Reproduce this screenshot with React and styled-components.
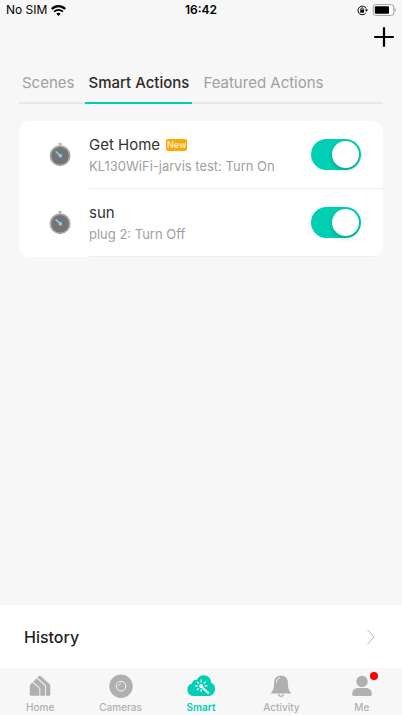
import React, { useState } from 'react';
import styled, { createGlobalStyle } from 'styled-components';

const GlobalStyle = createGlobalStyle`
  * {
    box-sizing: border-box;
  }

  body {
    margin: 0;
    background: #f7f7f7;
    color: #2b2b2b;
    font-family: Inter, 'Liberation Sans', sans-serif;
  }

  button {
    font-family: inherit;
    color: inherit;
    background: none;
    border: 0;
    padding: 0;
    cursor: pointer;
  }
`;

const Page = styled.div`
  display: flex;
  flex-direction: column;
  min-height: 100vh;
`;

const StatusBar = styled.div`
  display: grid;
  grid-template-columns: 1fr auto 1fr;
  align-items: center;
  height: 20px;
  padding: 0 6px;
  font-size: 12px;
  line-height: 20px;
  color: #000;
`;

const StatusGroup = styled.div`
  display: flex;
  align-items: center;
  justify-content: ${(props) => (props.$end ? 'flex-end' : 'flex-start')};
  gap: 4px;
`;

const Clock = styled.span`
  font-weight: 600;
`;

const Header = styled.header`
  display: flex;
  justify-content: flex-end;
  padding: 6px 7px;
`;

const AddButton = styled.button`
  display: flex;
  width: 22px;
  height: 22px;
`;

const Tabs = styled.div`
  display: flex;
  gap: 8px;
  margin: 8px 19px 0;
  border-bottom: 2px solid #e8e8e8;
`;

const Tab = styled.button`
  height: 42px;
  margin-bottom: -2px;
  padding: 2px 3px 0;
  border-bottom: 2px solid ${(props) => (props.$active ? '#00cfb4' : 'transparent')};
  font-size: 15px;
  font-weight: ${(props) => (props.$active ? 500 : 400)};
  line-height: 20px;
  white-space: nowrap;
  color: ${(props) => (props.$active ? '#2b2b2b' : '#a0a0a0')};
`;

const Card = styled.ul`
  list-style: none;
  margin: 17px 19px 0;
  padding: 0 0 0 30px;
  background: #fff;
  border-radius: 10px;
  overflow: hidden;
`;

const Row = styled.li`
  display: flex;
  align-items: center;
  gap: 18px;
  height: 68px;
`;

const RowBody = styled.div`
  flex: 1;
  display: flex;
  align-items: center;
  justify-content: space-between;
  height: 100%;
  padding-right: 22px;
  border-bottom: 1px solid #ededed;
`;

const RowTitle = styled.label`
  display: flex;
  align-items: center;
  gap: 6px;
  font-size: 15px;
  line-height: 22px;
  color: #333;
`;

const RowDetail = styled.div`
  font-size: 13px;
  line-height: 20px;
  color: #a0a0a0;
`;

const Badge = styled.span`
  height: 12px;
  padding: 0 1px;
  border-radius: 2px;
  background: #ffa800;
  color: #fff;
  font-size: 9px;
  line-height: 12px;
`;

const Switch = styled.input`
  appearance: none;
  flex: none;
  display: flex;
  width: 50px;
  height: 31px;
  margin: 0;
  padding: 2px;
  border-radius: 16px;
  background: #d9d9d9;
  cursor: pointer;

  &::before {
    content: '';
    width: 27px;
    height: 27px;
    border-radius: 50%;
    background: #fff;
    box-shadow: 0 2px 5px rgba(0, 0, 0, 0.2);
  }

  &:checked {
    justify-content: flex-end;
    background: #00cfb4;
  }
`;

const HistoryButton = styled.button`
  display: flex;
  align-items: center;
  justify-content: space-between;
  height: 63px;
  margin-top: auto;
  padding: 0 27px 0 24px;
  background: #fff;
  font-size: 16px;
  font-weight: 500;
  color: #1f1f1f;
`;

const BottomNav = styled.nav`
  display: grid;
  grid-template-columns: repeat(5, 1fr);
  height: 47px;
`;

const NavLink = styled.a`
  display: flex;
  flex-direction: column;
  align-items: center;
  gap: 3px;
  padding-top: 6px;
  color: ${(props) => (props.$active ? '#00cfb4' : '#b0b0b0')};
  font-size: 10px;
  font-weight: ${(props) => (props.$active ? 600 : 500)};
  line-height: 12px;
  text-decoration: none;
`;

const NavIcon = styled.span`
  position: relative;
  display: flex;
`;

const Dot = styled.span`
  position: absolute;
  top: -2px;
  right: -4px;
  width: 8px;
  height: 8px;
  border-radius: 50%;
  background: #f00;
`;

const WifiIcon = () => (
  <svg width="15" height="11" viewBox="0 0 15 11" fill="none" stroke="#000" strokeWidth="2.2">
    <path d="M0.8 4.1C4.7 0.1 10.3 0.1 14.2 4.1" />
    <path d="M3.1 6.6c2.5-2.4 6.3-2.4 8.8 0" strokeWidth="1.8" />
    <path d="M5.3 8.8a3.3 3.3 0 0 1 4.4 0L7.5 11z" fill="#000" stroke="none" />
  </svg>
);

const RotationLockIcon = () => (
  <svg width="11" height="11" viewBox="0 0 11 11" fill="none" stroke="#000">
    <path d="M8.9 7.8A4.3 4.3 0 1 1 9.2 3.6" />
    <path d="M7.6 4.6h3.4L9.6 6.8z" fill="#000" stroke="none" />
    <path d="M3.9 5V4a1.2 1.2 0 0 1 2.4 0v1" strokeWidth="0.8" />
    <rect x="3.2" y="4.7" width="3.8" height="3" fill="#000" stroke="none" />
  </svg>
);

const BatteryIcon = () => (
  <svg width="24" height="12" viewBox="0 0 24 12">
    <rect x="1.2" y="0.6" width="20.6" height="10.8" rx="2.6" fill="#fff" stroke="#a0a0a0" />
    <rect x="2.8" y="2.2" width="14.2" height="7.6" rx="1" fill="#000" />
    <path d="M22.6 4.2c1.6 0.5 1.6 3.1 0 3.6z" fill="#a0a0a0" />
  </svg>
);

const PlusIcon = () => (
  <svg width="22" height="22" viewBox="0 0 22 22" stroke="#000" strokeWidth="2.2">
    <path d="M11 1.2v19.6M1.2 11h19.6" />
  </svg>
);

const StopwatchIcon = () => (
  <svg width="22" height="24" viewBox="0 0 22 24">
    <path d="M9.3 0.8h3.6M11.1 0.8v3" stroke="#a9a9a9" strokeWidth="1.2" />
    <circle cx="11.1" cy="12.7" r="9.6" fill="#747474" stroke="#a7a7a7" strokeWidth="1.7" />
    <path d="M6.6 8.3l4.6 4.2" stroke="#83cbe9" strokeWidth="1.6" />
    <circle cx="11.3" cy="12.7" r="1.9" fill="#83cbe9" />
  </svg>
);

const ChevronIcon = () => (
  <svg width="8" height="16" viewBox="0 0 8 16" fill="none" stroke="#b5b5b5">
    <path d="M0.5 0.7L7 8L0.5 15.3" />
  </svg>
);

const HomeIcon = () => (
  <svg width="24" height="24" viewBox="0 0 24 24">
    <path
      d="M10.9 2Q11.8 1.3 12.7 2L21.3 9.7Q22.3 10.6 22.3 11.8V20.5Q22.3 21.8 21 21.8H17.9V12.2Q17.9 11.2 17.1 10.5L9.3 3.6z"
      fill="currentColor"
    />
    <path
      d="M8.6 4.3L16.4 11.2Q17 11.8 17 12.7V21.8H12.3V15.1Q12.3 14.1 11.5 13.4L5.1 7.7z"
      fill="currentColor"
    />
    <path
      d="M4.4 8.4L10.8 14.1Q11.4 14.7 11.4 15.6V21.8H3.1Q1.8 21.8 1.8 20.5V12.2Q1.8 10.9 2.7 10z"
      fill="currentColor"
    />
  </svg>
);

const CamerasIcon = () => (
  <svg width="24" height="24" viewBox="0 0 24 24" fill="none">
    <circle cx="12" cy="12.2" r="11.7" fill="currentColor" />
    <circle cx="12" cy="12.2" r="4.8" stroke="#f7f7f7" />
    <path d="M9.6 12a2.5 2.5 0 0 1 2.2-2.3" stroke="#f7f7f7" strokeWidth="0.8" />
  </svg>
);

const SmartIcon = () => (
  <svg width="30" height="24" viewBox="0 0 30 24" fill="none">
    <path
      d="M7.2 22.1A6.4 6.4 0 0 1 6 9.6C6.2 7 8.6 5.3 11 5.7 12.2 2.8 14.7 1.2 17.6 1.2c4.4 0 7.6 3.2 7.6 7.6 2.5 1 3.9 3.2 3.9 6 0 4.2-3 7.3-6.8 7.3z"
      fill="currentColor"
    />
    <path d="M15.4 12.4l7.4 7" stroke="#fff" strokeWidth="2" />
    <path
      d="M15.2 5.6v3M15.2 15v2.8M9 11.9h2.8M18.8 11.9h2.6M10.9 7.6l1.9 1.9M19.6 7.6l-1.9 1.9M10.9 16.2l1.9-1.9"
      stroke="#fff"
      strokeWidth="1.2"
    />
    <circle cx="15.2" cy="12" r="2" fill="#fff" />
  </svg>
);

const ActivityIcon = () => (
  <svg width="24" height="24" viewBox="0 0 24 24" fill="none">
    <path
      d="M12 1.6c4.4 0 6.9 2.9 6.9 7.1 0 5 0.7 7.4 3.6 10.9H1.5C4.4 16.1 5.1 13.7 5.1 8.7 5.1 4.5 7.6 1.6 12 1.6z"
      fill="currentColor"
    />
    <path d="M7.3 8.5c0.2-2.7 1.5-4.3 3.7-4.8" stroke="#f7f7f7" />
    <path d="M9.7 20a2.3 2.3 0 0 0 4.6 0" stroke="currentColor" strokeWidth="1.2" />
  </svg>
);

const MeIcon = () => (
  <svg width="24" height="24" viewBox="0 0 24 24" fill="currentColor">
    <circle cx="12" cy="7.5" r="5.7" />
    <path d="M2.2 20.2c0-4 2.4-6.2 6-6.2h7.6c3.6 0 6 2.2 6 6.2 0 1.2-0.6 1.8-1.8 1.8H4c-1.2 0-1.8-0.6-1.8-1.8z" />
  </svg>
);

const tabs = ['Scenes', 'Smart Actions', 'Featured Actions'];

const initialActions = [
  { id: 'get-home', name: 'Get Home', detail: 'KL130WiFi-jarvis test: Turn On', isNew: true, on: true },
  { id: 'sun', name: 'sun', detail: 'plug 2: Turn Off', isNew: false, on: true },
];

const navItems = [
  { name: 'Home', Icon: HomeIcon },
  { name: 'Cameras', Icon: CamerasIcon },
  { name: 'Smart', Icon: SmartIcon },
  { name: 'Activity', Icon: ActivityIcon },
  { name: 'Me', Icon: MeIcon, dot: true },
];

const App = () => {
  const [activeTab, setActiveTab] = useState('Smart Actions');
  const [actions, setActions] = useState(initialActions);

  const toggleAction = (id) => {
    setActions(actions.map((action) => (action.id === id ? { ...action, on: !action.on } : action)));
  };

  return (
    <Page>
      <GlobalStyle />
      <StatusBar>
        <StatusGroup>
          <span>No SIM</span>
          <WifiIcon />
        </StatusGroup>
        <Clock>16:42</Clock>
        <StatusGroup $end>
          <RotationLockIcon />
          <BatteryIcon />
        </StatusGroup>
      </StatusBar>
      <Header>
        <AddButton aria-label='Add'>
          <PlusIcon />
        </AddButton>
      </Header>
      <Tabs role='tablist'>
        {tabs.map((tab) => (
          <Tab
            key={tab}
            role='tab'
            aria-selected={tab === activeTab}
            $active={tab === activeTab}
            onClick={() => setActiveTab(tab)}
          >
            {tab}
          </Tab>
        ))}
      </Tabs>
      <Card>
        {actions.map((action) => (
          <Row key={action.id}>
            <StopwatchIcon />
            <RowBody>
              <div>
                <RowTitle htmlFor={action.id}>
                  {action.name}
                  {action.isNew && <Badge>New</Badge>}
                </RowTitle>
                <RowDetail>{action.detail}</RowDetail>
              </div>
              <Switch
                id={action.id}
                type='checkbox'
                checked={action.on}
                onChange={() => toggleAction(action.id)}
              />
            </RowBody>
          </Row>
        ))}
      </Card>
      <HistoryButton>
        History
        <ChevronIcon />
      </HistoryButton>
      <BottomNav>
        {navItems.map(({ name, Icon, dot }) => (
          <NavLink key={name} href={`#${name.toLowerCase()}`} $active={name === 'Smart'}>
            <NavIcon>
              <Icon />
              {dot && <Dot />}
            </NavIcon>
            {name}
          </NavLink>
        ))}
      </BottomNav>
    </Page>
  );
};

export default App;
